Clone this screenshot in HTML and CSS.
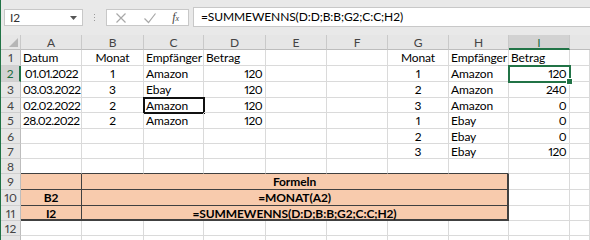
FILE: index.html
```html
<!DOCTYPE html>
<html lang="de">
<head>
    <meta charset="UTF-8">
    <title>SUMMEWENNS Beispiel</title>
    <link rel="stylesheet" href="styles.css">
</head>
<body>
    <div class="app">
        <div class="toolbar">
            <div class="namebox">
                <span>I2</span>
                <svg class="caret" width="7" height="4" viewBox="0 0 7 4"><path d="M0 0h7L3.5 4z" fill="#555"/></svg>
            </div>
            <div class="grip"><i></i><i></i><i></i></div>
            <div class="fbuttons">
                <svg width="12" height="12" viewBox="0 0 12 12"><path d="M1.5 1.5l9 9M10.5 1.5l-9 9" stroke="#a8a8a8" stroke-width="1.2" fill="none"/></svg>
                <svg width="14" height="12" viewBox="0 0 14 12"><path d="M1.5 6.5l4 4 7-9" stroke="#a8a8a8" stroke-width="1.2" fill="none"/></svg>
                <span class="fx">f<small>x</small></span>
            </div>
            <div class="formula">=SUMMEWENNS(D:D;B:B;G2;C:C;H2)</div>
        </div>

        <div class="grid">
            <!-- column headers -->
            <div class="hd corner"><span class="tri"></span></div>
            <div class="hd">A</div><div class="hd">B</div><div class="hd">C</div><div class="hd">D</div>
            <div class="hd">E</div><div class="hd">F</div><div class="hd">G</div><div class="hd">H</div>
            <div class="hd sel-col">I</div><div class="hd last"></div>

            <!-- 1 -->
            <div class="rh">1</div>
            <div class="c">Datum</div><div class="c m">Monat</div><div class="c">Empfänger</div><div class="c">Betrag</div>
            <div class="c"></div><div class="c"></div>
            <div class="c m">Monat</div><div class="c">Empfänger</div><div class="c">Betrag</div><div class="c"></div>

            <!-- 2 -->
            <div class="rh sel-row">2</div>
            <div class="c r">01.01.2022</div><div class="c m">1</div><div class="c">Amazon</div><div class="c r">120</div>
            <div class="c"></div><div class="c"></div>
            <div class="c m">1</div><div class="c">Amazon</div><div class="c r active">120</div><div class="c"></div>

            <!-- 3 -->
            <div class="rh">3</div>
            <div class="c r">03.03.2022</div><div class="c m">3</div><div class="c">Ebay</div><div class="c r">120</div>
            <div class="c"></div><div class="c"></div>
            <div class="c m">2</div><div class="c">Amazon</div><div class="c r">240</div><div class="c"></div>

            <!-- 4 -->
            <div class="rh">4</div>
            <div class="c r">02.02.2022</div><div class="c m">2</div><div class="c boxed">Amazon</div><div class="c r">120</div>
            <div class="c"></div><div class="c"></div>
            <div class="c m">3</div><div class="c">Amazon</div><div class="c r">0</div><div class="c"></div>

            <!-- 5 -->
            <div class="rh">5</div>
            <div class="c r">28.02.2022</div><div class="c m">2</div><div class="c">Amazon</div><div class="c r">120</div>
            <div class="c"></div><div class="c"></div>
            <div class="c m">1</div><div class="c">Ebay</div><div class="c r">0</div><div class="c"></div>

            <!-- 6 -->
            <div class="rh">6</div>
            <div class="c"></div><div class="c"></div><div class="c"></div><div class="c"></div>
            <div class="c"></div><div class="c"></div>
            <div class="c m">2</div><div class="c">Ebay</div><div class="c r">0</div><div class="c"></div>

            <!-- 7 -->
            <div class="rh">7</div>
            <div class="c"></div><div class="c"></div><div class="c"></div><div class="c"></div>
            <div class="c"></div><div class="c"></div>
            <div class="c m">3</div><div class="c">Ebay</div><div class="c r">120</div><div class="c"></div>

            <!-- 8 -->
            <div class="rh">8</div>
            <div class="c above"></div><div class="c above"></div><div class="c above"></div><div class="c above"></div>
            <div class="c above"></div><div class="c above"></div><div class="c above"></div><div class="c above"></div>
            <div class="c"></div><div class="c"></div>

            <!-- 9 - 11 Formeln -->
            <div class="rh">9</div>
            <div class="c o"></div><div class="c o m b merged">Formeln</div>
            <div class="c"></div><div class="c"></div>

            <div class="rh">10</div>
            <div class="c o m b">B2</div><div class="c o m b merged">=MONAT(A2)</div>
            <div class="c"></div><div class="c"></div>

            <div class="rh">11</div>
            <div class="c o m b end">I2</div><div class="c o m b merged end">=SUMMEWENNS(D:D;B:B;G2;C:C;H2)</div>
            <div class="c"></div><div class="c"></div>

            <!-- 12, 13 -->
            <div class="rh">12</div>
            <div class="c"></div><div class="c"></div><div class="c"></div><div class="c"></div>
            <div class="c"></div><div class="c"></div><div class="c"></div><div class="c"></div>
            <div class="c"></div><div class="c"></div>

            <div class="rh"></div>
            <div class="c"></div><div class="c"></div><div class="c"></div><div class="c"></div>
            <div class="c"></div><div class="c"></div><div class="c"></div><div class="c"></div>
            <div class="c"></div><div class="c"></div>
        </div>
    </div>
</body>
</html>
```

FILE: styles.css
```css
* {
    margin: 0;
    padding: 0;
    box-sizing: border-box;
}

body {
    width: 590px;
    height: 240px;
    overflow: hidden;
    background: #fff;
    font-family: Lato, 'Liberation Sans', sans-serif;
    font-size: 12px;
    font-variant-numeric: proportional-nums;
    letter-spacing: -0.1px;
    color: #000;
}

.app {
    height: 240px;
    border-left: 1px solid #217346;
    overflow: hidden;
}

/* formula bar */
.toolbar {
    height: 35px;
    background: #e9e9e9;
    display: flex;
    align-items: center;
    padding-left: 3px;
}

.namebox {
    width: 79px;
    height: 17px;
    background: #fff;
    border: 1px solid #c8c8c8;
    display: flex;
    align-items: center;
    justify-content: space-between;
    padding: 0 5px;
    color: #333;
}

.grip {
    width: 23px;
    display: flex;
    flex-direction: column;
    align-items: center;
    gap: 2px;
}

.grip i {
    width: 1px;
    height: 1px;
    background: #9a9a9a;
}

.fbuttons {
    width: 83px;
    height: 17px;
    background: #fff;
    border: 1px solid #c8c8c8;
    display: flex;
    align-items: center;
    justify-content: space-between;
    padding: 0 9px 0 8px;
}

.fx {
    font-family: 'Liberation Serif', serif;
    font-style: italic;
    font-size: 12px;
    color: #444;
}

.fx small {
    font-size: 8px;
}

.formula {
    flex: 1;
    height: 20px;
    margin-left: 4px;
    margin-top: -1px;
    background: #fff;
    border: 1px solid #c8c8c8;
    border-right: none;
    padding-left: 7px;
    line-height: 18px;
}

/* sheet */
.grid {
    display: grid;
    grid-template-columns: 20px 61px 62px 60px 62px 61px 61px 61px 60px 61px 1fr;
    grid-template-rows: 15px 16px 16px 16px 15px 16px 15px 15px 15px 16px 16px 15px 15px 15px;
}

.hd {
    background: #e6e6e6;
    border-right: 1px solid #c9c9c9;
    border-bottom: 1px solid #bdbdbd;
    text-align: center;
    line-height: 15px;
    color: #444;
}

.hd.last {
    border-right: none;
}

.corner {
    position: relative;
}

.tri {
    position: absolute;
    right: 2px;
    bottom: 2px;
    width: 0;
    height: 0;
    border-left: 9px solid transparent;
    border-bottom: 9px solid #b6b6b6;
}

.sel-col {
    background: #d2d2d2;
    border-bottom: 2px solid #217346;
    color: #1e6b40;
}

.rh {
    background: #e6e6e6;
    border-right: 1px solid #bdbdbd;
    border-bottom: 1px solid #cfcfcf;
    text-align: center;
    color: #444;
    line-height: 15px;
}

.sel-row {
    background: #d2d2d2;
    border-right: 2px solid #217346;
    color: #1e6b40;
}

.c {
    border-right: 1px solid #dadada;
    border-bottom: 1px solid #dadada;
    padding: 0 2px;
    line-height: 15px;
    white-space: nowrap;
}

.r {
    text-align: right;
    letter-spacing: -0.6px;
    padding-right: 3px;
}

.m {
    text-align: center;
}

.b {
    font-weight: bold;
}

.merged {
    grid-column: span 7;
}

.above {
    border-bottom-color: #404040;
}

.o {
    background: #f8cbad;
    border-right-color: #404040;
    border-bottom-color: #404040;
}

.merged.o {
    border-right: 2px solid #404040;
}

.o.end {
    border-bottom: 2px solid #404040;
}

.active {
    position: relative;
    outline: 2px solid #217346;
    outline-offset: -1px;
}

.active::after {
    content: '';
    position: absolute;
    right: -4px;
    bottom: -4px;
    width: 5px;
    height: 5px;
    background: #217346;
    border: 1px solid #fff;
}

.boxed {
    outline: 2px solid #111;
    outline-offset: -1px;
}
```
